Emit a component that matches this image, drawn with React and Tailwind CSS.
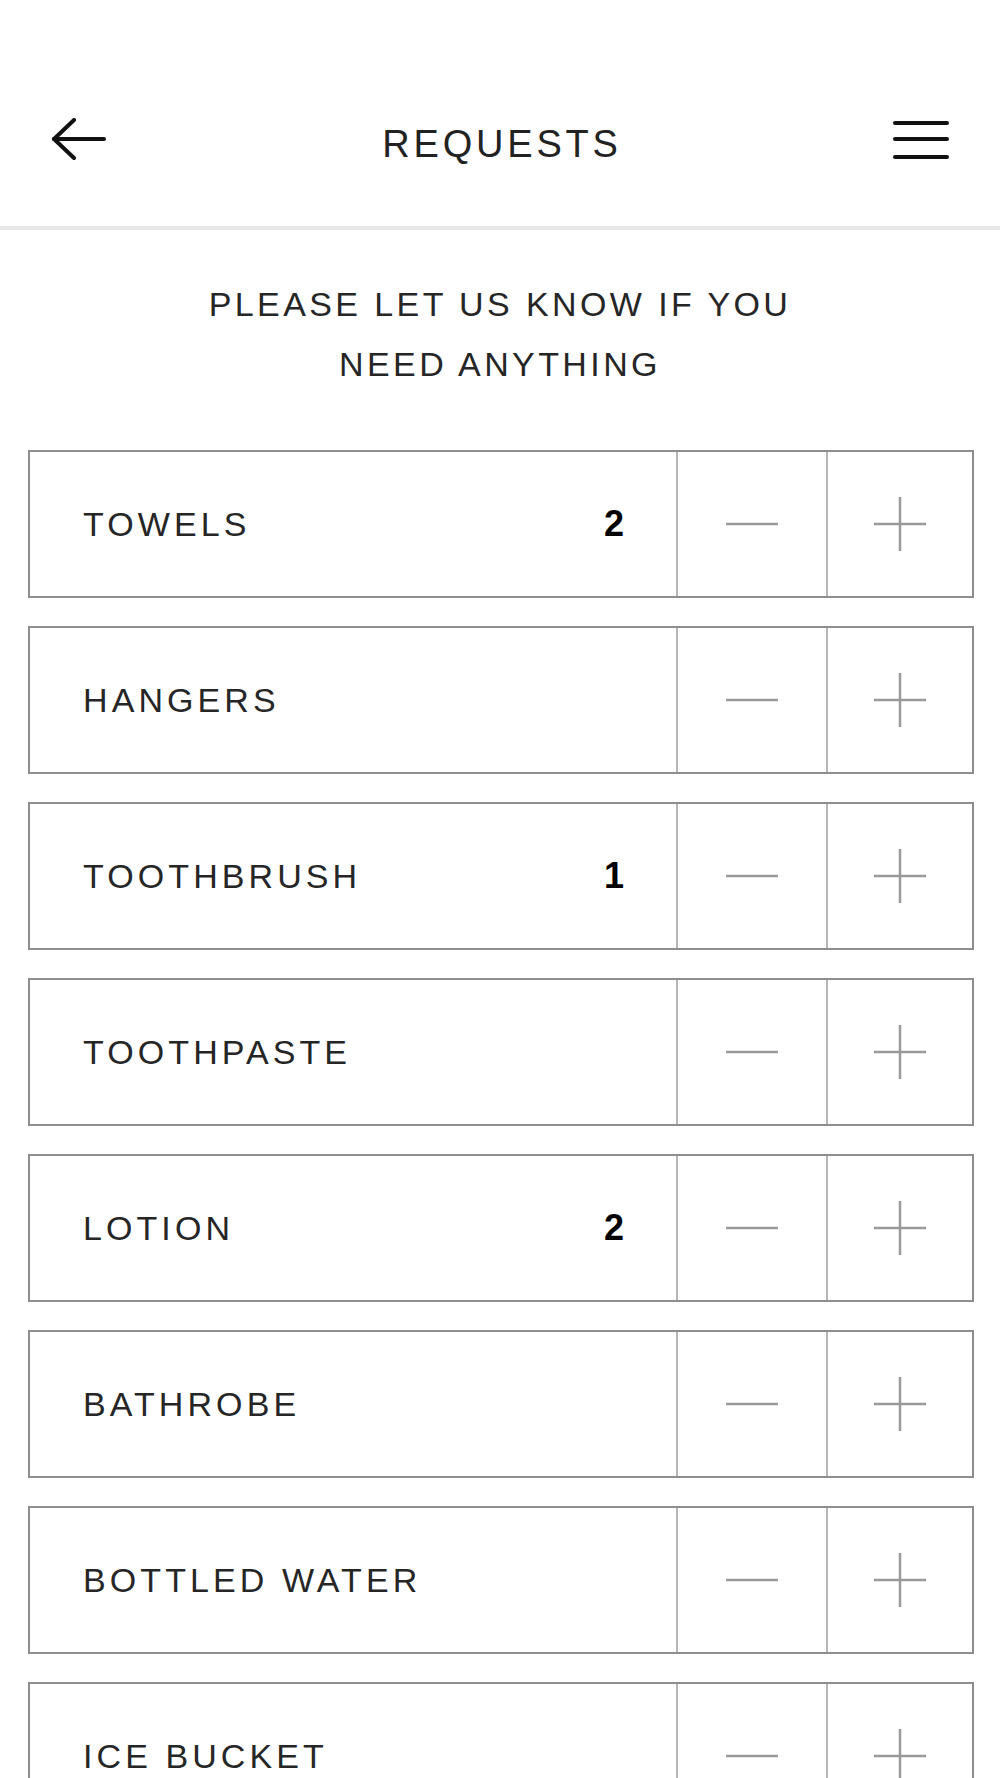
import { useState } from 'react'

const ITEMS = [
  { id: 'towels', label: 'TOWELS', qty: 2 },
  { id: 'hangers', label: 'HANGERS', qty: 0 },
  { id: 'toothbrush', label: 'TOOTHBRUSH', qty: 1 },
  { id: 'toothpaste', label: 'TOOTHPASTE', qty: 0 },
  { id: 'lotion', label: 'LOTION', qty: 2 },
  { id: 'bathrobe', label: 'BATHROBE', qty: 0 },
  { id: 'water', label: 'BOTTLED WATER', qty: 0 },
  { id: 'ice', label: 'ICE BUCKET', qty: 0 },
]

function BackIcon() {
  return (
    <svg width="56" height="44" viewBox="0 0 56 44" fill="none" stroke="#111" strokeWidth="4" strokeLinecap="round" strokeLinejoin="round">
      <path d="M3 21h50" />
      <path d="M23 2 3 21l20 19" />
    </svg>
  )
}

function MenuIcon() {
  return (
    <svg width="56" height="40" viewBox="0 0 56 40" fill="none" stroke="#111" strokeWidth="4" strokeLinecap="round">
      <path d="M2 3h52" />
      <path d="M2 19h52" />
      <path d="M2 37h52" />
    </svg>
  )
}

function MinusIcon() {
  return (
    <svg width="56" height="56" viewBox="0 0 56 56" fill="none" stroke="#9a9a9a" strokeWidth="2.5">
      <path d="M2 28h52" />
    </svg>
  )
}

function PlusIcon() {
  return (
    <svg width="56" height="56" viewBox="0 0 56 56" fill="none" stroke="#9a9a9a" strokeWidth="2.5">
      <path d="M2 28h52" />
      <path d="M28 1v54" />
    </svg>
  )
}

export default function App() {
  const [items, setItems] = useState(ITEMS)

  const change = (id, d) => {
    setItems((prev) => prev.map((it) => (it.id === id ? { ...it, qty: Math.max(0, it.qty + d) } : it)))
  }

  return (
    <div className="h-[1778px] overflow-hidden bg-white font-['Liberation_Sans',Arial,sans-serif] text-[#262626]">
      {/* header */}
      <header className="h-[230px] border-b-4 border-[#e6e6e6] pt-[104px]">
        <div className="flex h-[80px] items-center justify-between pl-[51px] pr-[51px]">
          <button type="button" className="mb-[8px]"><BackIcon /></button>
          <h1 className="pl-[4px] text-[38px] tracking-[0.1em] text-[#222]">REQUESTS</h1>
          <button type="button" className="mb-[9px]"><MenuIcon /></button>
        </div>
      </header>

      <p className="mt-[44px] text-center text-[34px] leading-[60px] tracking-[0.1em]">
        PLEASE LET US KNOW IF YOU<br />NEED ANYTHING
      </p>

      <div className="mt-[56px] flex flex-col gap-[28px] pl-[28px] pr-[26px]">
        {items.map((it) => (
          <div key={it.id} className="flex h-[148px] shrink-0 border-2 border-[#8e8e8e]">
            <div className="flex flex-1 items-center justify-between pl-[53px] pr-[52px]">
              <span className="text-[34px] tracking-[0.12em]">{it.label}</span>
              {it.qty > 0 && <span className="text-[36px] font-bold text-black">{it.qty}</span>}
            </div>
            <button type="button" className="flex w-[150px] items-center justify-center border-l-2 border-[#b8b8b8]" onClick={() => change(it.id, -1)}>
              <MinusIcon />
            </button>
            <button type="button" className="flex w-[146px] items-center justify-center border-l-2 border-[#b8b8b8]" onClick={() => change(it.id, 1)}>
              <PlusIcon />
            </button>
          </div>
        ))}
      </div>
    </div>
  )
}
